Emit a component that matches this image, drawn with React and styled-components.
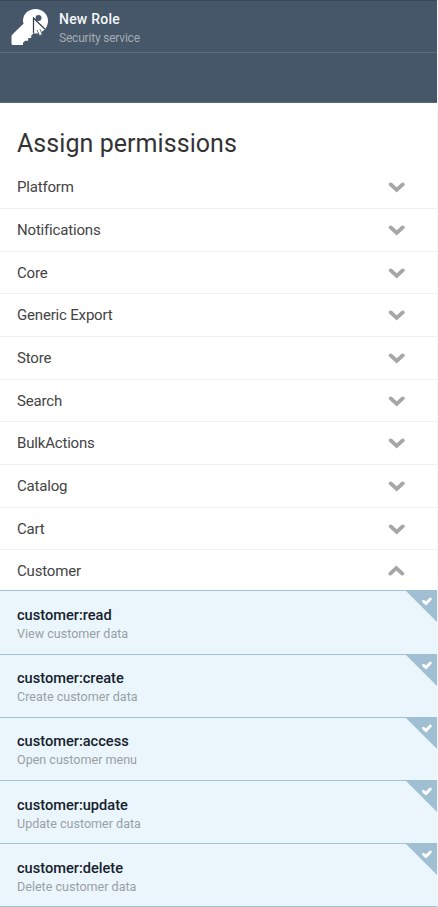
import React from "react";
import styled, { createGlobalStyle } from "styled-components";

const GlobalStyle = createGlobalStyle`
  * { box-sizing: border-box; }
  body { margin: 0; background: #f3f5f9; font-family: Roboto, "Liberation Sans", sans-serif; overflow: hidden; }
`;

const Blade = styled.main`
  width: 437px;
  height: 907px;
  background: #fff;
  overflow: hidden;
`;

const Header = styled.header`
  display: flex;
  height: 53px;
  background: #465769;
  border-top: 1px solid #3b4858;
  border-bottom: 1px solid #5e6b79;
  padding-left: 11px;
`;

const HeaderIcon = styled.div`
  position: relative;
  width: 48px;
  padding-top: 7px;
`;

const Pointer = styled.svg`
  position: absolute;
  left: 21px;
  top: 16px;
`;

const HeaderText = styled.div`
  padding-top: 8px;
`;

const HeaderTitle = styled.div`
  font-size: 14px;
  line-height: 20px;
  font-weight: 500;
  color: #f5f7f9;
  letter-spacing: 0.22px;
`;

const HeaderSubtitle = styled.div`
  font-size: 12px;
  line-height: 18px;
  color: #a5abb1;
  letter-spacing: -0.2px;
`;

const Toolbar = styled.div`
  height: 50px;
  background: #465769;
  border-bottom: 1px solid #596a7b;
`;

const Title = styled.h1`
  margin: 0;
  height: 63.5px;
  padding: 24px 0 0 17px;
  font-size: 25px;
  line-height: 34px;
  font-weight: 400;
  color: #333;
  letter-spacing: 0.06px;
`;

const Group = styled.button`
  display: flex;
  align-items: center;
  justify-content: space-between;
  width: 100%;
  height: ${(p) => (p.$open ? "40px" : "42.67px")};
  padding: ${(p) => (p.$open ? "1px" : "0.3px")} 32px 0 17px;
  border: 0;
  border-bottom: ${(p) => (p.$open ? "0" : "1px solid #eef0f3")};
  background: transparent;
  font: 400 15px/20px Roboto, "Liberation Sans", sans-serif;
  letter-spacing: -0.18px;
  color: #444;
  text-align: left;
`;

const Chevron = styled.svg`
  transform: ${(p) => (p.$open ? "rotate(180deg)" : "none")};
`;

const Permission = styled.div`
  position: relative;
  height: 63.2px;
  padding: 13.6px 17px 0;
  background: #eaf6fc;
  border-top: 1px solid #a2c1d5;
`;

const PermissionName = styled.div`
  font-size: 14.6px;
  line-height: 20px;
  font-weight: 500;
  color: #16212d;
`;

const PermissionText = styled.div`
  font-size: 12.55px;
  line-height: 18px;
  color: #999fa3;
`;

const Corner = styled.svg`
  position: absolute;
  top: -1px;
  right: 0;
`;

const groups = ["Platform", "Notifications", "Core", "Generic Export", "Store", "Search", "BulkActions", "Catalog", "Cart", "Customer"];

const permissions = [
  ["customer:read", "View customer data"],
  ["customer:create", "Create customer data"],
  ["customer:access", "Open customer menu"],
  ["customer:update", "Update customer data"],
  ["customer:delete", "Delete customer data"],
];

export default function App() {
  return (
    <>
      <GlobalStyle />
      <Blade>
        <Header>
          <HeaderIcon>
            <svg width="38" height="38" viewBox="0 0 38 38">
              <path
                fill="#fff"
                fillRule="evenodd"
                d="M24.500 1C31.500 1 37 6.300 37 13S31.500 25.500 24.500 25.500L22.500 25.200L20.200 27.500V30H17.200V32.700H14.200L12 34.800V37H2Q.5 37 .5 35.500V28.500Q.5 27.300 1.400 26.400L12.600 15.500Q12 14 12 12.500C12 6 17.500 1 24.500 1ZM27.500 7A3 3 0 1 0 27.500 13A3 3 0 0 0 27.500 7Z"
              />
            </svg>
            <Pointer width="16" height="21" viewBox="0 0 16 21">
              <path d="M1.500 1V16L5 12.900L7.500 18.500L10.200 17.400L7.800 12H12.800Z" fill="#fff" />
              <path d="M5 12.900L7.500 18.500L10.200 17.400L7.800 12" fill="none" stroke="#687583" strokeWidth="1" />
              <path d="M1.500 16V1L12.800 12" fill="none" stroke="#2f3b49" strokeWidth="1.200" />
            </Pointer>
          </HeaderIcon>
          <HeaderText>
            <HeaderTitle>New Role</HeaderTitle>
            <HeaderSubtitle>Security service</HeaderSubtitle>
          </HeaderText>
        </Header>
        <Toolbar />
        <Title>Assign permissions</Title>
        {groups.map((name) => {
          const open = name === "Customer";
          return (
            <Group key={name} $open={open}>
              {name}
              <Chevron $open={open} width="17" height="12" viewBox="0 0 17 12">
                <path d="M2.700 3.400L8.700 9L14.700 3.400" fill="none" stroke="#a6a6a6" strokeWidth="3.800" strokeLinecap="round" />
              </Chevron>
            </Group>
          );
        })}
        {permissions.map(([name, text]) => (
          <Permission key={name}>
            <PermissionName>{name}</PermissionName>
            <PermissionText>{text}</PermissionText>
            <Corner width="32" height="32" viewBox="0 0 32 32">
              <path d="M0 0H32V32Z" fill="#a1bfd3" />
              <path d="M18.500 11.300L21 13.500L25.300 9" fill="none" stroke="#fff" strokeWidth="2.900" strokeLinecap="round" />
            </Corner>
          </Permission>
        ))}
        <Permission />
      </Blade>
    </>
  );
}
